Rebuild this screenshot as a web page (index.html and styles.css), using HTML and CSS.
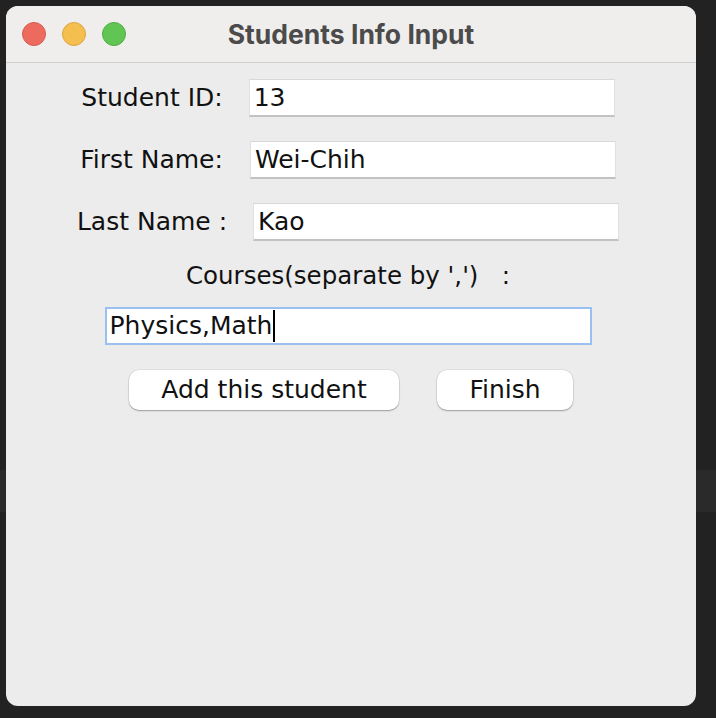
FILE: index.html
```html
<!DOCTYPE html>
<html>
<head>
<meta charset="utf-8">
<link rel="stylesheet" href="styles.css">
</head>
<body>
<div class="window">
  <div class="titlebar">
    <div class="lights">
      <span class="light red"></span>
      <span class="light yellow"></span>
      <span class="light green"></span>
    </div>
    <div class="title">Students Info Input</div>
    <div></div>
  </div>
  <div class="content">
    <div class="row">
      <span class="label">Student ID:</span>
      <div class="field">13</div>
    </div>
    <div class="row row2">
      <span class="label">First Name:</span>
      <div class="field">Wei-Chih</div>
    </div>
    <div class="row row3">
      <span class="label">Last Name :</span>
      <div class="field">Kao</div>
    </div>
    <div class="courses-label">Courses(separate by ',')&nbsp;&nbsp;&nbsp;:</div>
    <div class="row">
      <div class="field wide focus">Physics,Math<span class="caret"></span></div>
    </div>
    <div class="buttons">
      <div class="btn add">Add this student</div>
      <div class="btn finish">Finish</div>
    </div>
  </div>
</div>
</body>
</html>
```

FILE: styles.css
```css
html, body {
  margin: 0;
  padding: 0;
}
body {
  width: 716px;
  height: 718px;
  box-sizing: border-box;
  padding: 6px 0 0 6px;
  background: linear-gradient(to bottom, #222222 0, #222222 470px, #2a2a2a 470px, #2a2a2a 512px, #222222 512px);
  overflow: hidden;
}
.window {
  width: 690px;
  height: 700px;
  border-radius: 12px;
  background: #ececec;
  overflow: hidden;
  font-family: "DejaVu Sans", sans-serif;
  color: #111;
}
.titlebar {
  height: 56px;
  background: #efeeed;
  border-bottom: 1px solid #cfcfcf;
  display: grid;
  grid-template-columns: 1fr auto 1fr;
  align-items: center;
}
.lights {
  display: flex;
  gap: 16px;
  padding-left: 16px;
}
.light {
  width: 22px;
  height: 22px;
  border-radius: 50%;
  display: block;
}
.red { background: #ed6a5e; border: 1px solid #d85a4f; }
.yellow { background: #f5bf4f; border: 1px solid #dca63f; }
.green { background: #61c554; border: 1px solid #4fae44; }
.title {
  font-family: "Inter", "Liberation Sans", sans-serif;
  font-weight: 700;
  font-size: 26.5px;
  color: #4b4b4b;
  padding-bottom: 1px;
}
.content {
  padding-top: 16px;
  display: flex;
  flex-direction: column;
}
.row {
  display: flex;
  justify-content: center;
  align-items: center;
  gap: 26px;
  height: 38px;
  padding-right: 6px;
}
.row + .row { margin-top: 24px; }
.label {
  font-size: 25px;
  line-height: 30px;
}
.field {
  box-sizing: border-box;
  width: 366px;
  height: 38px;
  background: #fff;
  border: 1px solid #e0e0e0;
  border-top-color: #d8d8d8;
  border-bottom: 2px solid #c2c2c2;
  font-size: 25px;
  line-height: 34px;
  padding-left: 4px;
  display: flex;
  align-items: center;
}
.row2 .field { margin-left: 1px; }
.field.wide {
  width: 487px;
  border: 2px solid #98c0f1;
  padding-left: 3px;
}
.courses-label {
  font-size: 24.5px;
  line-height: 30px;
  text-align: center;
  padding-right: 6px;
  margin-top: 20px;
  margin-bottom: 16px;
}
.courses-label + .row { margin-top: 0; }
.caret {
  display: inline-block;
  width: 2px;
  height: 32px;
  background: #000;
  margin-left: 1px;
}
.buttons {
  display: flex;
  justify-content: center;
  gap: 38px;
  margin-top: 25px;
}
.btn {
  height: 40px;
  box-sizing: border-box;
  background: #fff;
  border-radius: 10px;
  box-shadow: 0 1px 1.5px rgba(0, 0, 0, 0.3), 0 0 0 0.5px rgba(0, 0, 0, 0.1);
  font-size: 25px;
  line-height: 40px;
  text-align: center;
}
.add { width: 270px; }
.finish { width: 136px; }
```
